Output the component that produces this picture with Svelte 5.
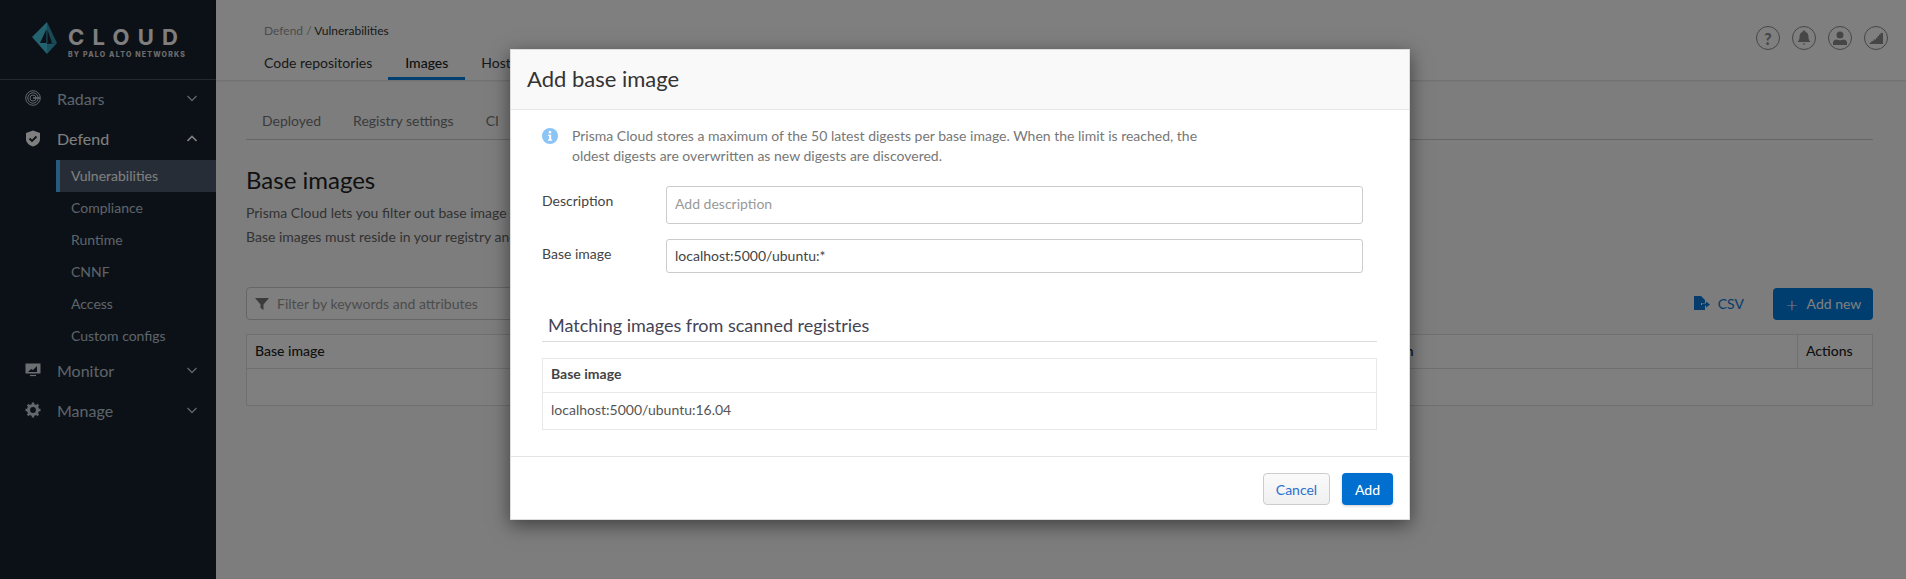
<script>
  const subs = ['Vulnerabilities', 'Compliance', 'Runtime', 'CNNF', 'Access', 'Custom configs'];
</script>

<div class="page">
  <aside class="side">
    <div class="brand">
      <svg class="mark" width="26" height="33" viewBox="0 0 26 33">
        <path d="M15 0 L0 15 L15 32 Z" fill="#46c4de"/>
        <path d="M15 0 L25 21 L15 21 Z" fill="#2f94ac"/>
        <path d="M8 21 L14.500 7 L14.500 21 Z" fill="#18222f"/>
        <path d="M15.500 8 L20 21 L15.500 21 Z" fill="#18222f"/>
        <path d="M15 22 L25 21 L15 32 Z" fill="#36a0bc"/>
      </svg>
      <div class="words">
        <div class="cloud">CLOUD</div>
        <div class="by">BY PALO ALTO NETWORKS</div>
      </div>
    </div>
    <nav>
      <div class="nav">
        <svg class="ico" width="16" height="16" viewBox="0 0 16 16" fill="none" stroke="#c4d0dc" stroke-width="1"><circle cx="8" cy="8" r="7.300"/><circle cx="8" cy="8" r="5.200"/><circle cx="8" cy="8" r="3"/><path d="M8 8h7" stroke-width="1.600"/></svg>
        <span>Radars</span>
        <svg class="chev" width="10" height="7" viewBox="0 0 10 7" fill="none" stroke="#b8c4d0" stroke-width="1.400"><path d="M.5 1l4.500 4.500L9.500 1"/></svg>
      </div>
      <div class="nav on">
        <svg class="ico" width="16" height="17" viewBox="0 0 16 17"><path d="M8 0.500L15 3v6c0 4-3.500 6.500-7 7.500C4.500 15.500 1 13 1 9V3z" fill="#fff"/><path d="M4.500 8.500l2.500 2.500 4.500-4.500" fill="none" stroke="#18222f" stroke-width="1.800"/></svg>
        <span>Defend</span>
        <svg class="chev" width="10" height="7" viewBox="0 0 10 7" fill="none" stroke="#fff" stroke-width="1.600"><path d="M.5 6L5 1.500 9.500 6"/></svg>
      </div>
      {#each subs as s, i}
        <div class="sub" class:active={i === 0}>{s}</div>
      {/each}
      <div class="nav">
        <svg class="ico" width="16" height="14" viewBox="0 0 16 14"><path d="M0.500 0.500h15v10h-15z" fill="#d8dee4"/><path d="M3 9l3-3 2 1 4-4v6z" fill="#18222f"/><path d="M5 12.500h6" stroke="#d8dee4" stroke-width="1.200"/></svg>
        <span>Monitor</span>
        <svg class="chev" width="10" height="7" viewBox="0 0 10 7" fill="none" stroke="#b8c4d0" stroke-width="1.400"><path d="M.5 1l4.500 4.500L9.500 1"/></svg>
      </div>
      <div class="nav">
        <svg class="ico" width="16" height="16" viewBox="0 0 16 16"><circle cx="8" cy="8" r="4.500" fill="none" stroke="#c4d0dc" stroke-width="3.200"/><path d="M8 0.500v3M8 12.500v3M0.500 8h3M12.500 8h3M2.700 2.700l2.100 2.100M11.200 11.200l2.100 2.100M13.300 2.700l-2.100 2.100M4.800 11.200l-2.100 2.100" stroke="#c4d0dc" stroke-width="2.400"/></svg>
        <span>Manage</span>
        <svg class="chev" width="10" height="7" viewBox="0 0 10 7" fill="none" stroke="#b8c4d0" stroke-width="1.400"><path d="M.5 1l4.500 4.500L9.500 1"/></svg>
      </div>
    </nav>
  </aside>

  <main class="main">
    <div class="toggle">
      <svg width="7" height="11" viewBox="0 0 7 11" fill="none" stroke="#fff" stroke-width="1.200"><path d="M5.500 1L1.500 5.500l4 4.500"/></svg>
    </div>
    <header class="head">
      <div class="crumb"><span>Defend /</span> <b>Vulnerabilities</b></div>
      <div class="tabs">
        <span class="tab">Code repositories</span>
        <span class="tab cur">Images</span>
        <span class="tab">Hosts</span>
      </div>
      <div class="icons">
        <span class="circle q">?</span>
        <span class="circle"><svg width="14" height="16" viewBox="0 0 14 16"><path d="M7 0.500c1 0 1.500.7 1.500 1.500C11 2.800 11.500 5 11.500 7.500c0 2 1 3.500 2 4.500H.5c1-1 2-2.500 2-4.500C2.500 5 3 2.800 5.500 2 5.500 1.200 6 .5 7 .5z" fill="#8c8c8c"/><path d="M5.500 13.500h3L7 15z" fill="#8c8c8c"/></svg></span>
        <span class="circle"><svg width="14" height="15" viewBox="0 0 14 15"><circle cx="7" cy="4" r="3.500" fill="#8c8c8c"/><path d="M0 14v-2.500C0 9.500 2 8.500 4 8.500c1 1 5 1 6 0 2 0 4 1 4 3V14z" fill="#8c8c8c"/></svg></span>
        <span class="circle"><svg width="14" height="11" viewBox="0 0 14 11"><path d="M0 11L3 8h1.500V6.500H7V5h1.500V3H10V1.500h1.500V0H14v11z" fill="#8c8c8c"/></svg></span>
      </div>
    </header>

    <section class="content">
      <div class="subtabs">
        <span>Deployed</span>
        <span>Registry settings</span>
        <span>CI</span>
      </div>
      <h1>Base images</h1>
      <p>Prisma Cloud lets you filter out base image<br>Base images must reside in your registry and</p>
      <div class="tools">
        <div class="filter">
          <svg width="14" height="14" viewBox="0 0 14 14"><path d="M0 1h14L8.500 7.500V13L5.500 11V7.500z" fill="#777"/></svg>
          <span>Filter by keywords and attributes</span>
        </div>
        <div class="csv">
          <svg width="16" height="16" viewBox="0 0 16 16"><path d="M0 0h7l4 4v3H7v2h4v5H0z" fill="#0a78d8"/><path d="M8 7.500h4V5.500l4 3-4 3v-2H8z" fill="#0a78d8"/></svg>
          <span>CSV</span>
        </div>
        <div class="addnew"><span class="plus">+</span>Add new</div>
      </div>
      <div class="table">
        <div class="row hd"><span class="c1">Base image</span><span class="c2">Description</span><span class="c3">Actions</span></div>
        <div class="row empty"></div>
      </div>
    </section>
  </main>

  <div class="backdrop"></div>

  <div class="modal">
    <div class="m-head">Add base image</div>
    <div class="m-body">
      <div class="info">
        <svg width="16" height="16" viewBox="0 0 16 16"><circle cx="8" cy="8" r="8" fill="#8cc4f5"/><rect x="6.800" y="3" width="2.400" height="2.400" fill="#fff"/><path d="M6 6.800h3.200v4.700h1v1.300H6v-1.300h1v-3.400H6z" fill="#fff"/></svg>
        <div>Prisma Cloud stores a maximum of the 50 latest digests per base image. When the limit is reached, the<br>oldest digests are overwritten as new digests are discovered.</div>
      </div>
      <div class="field f1">
        <label for="d">Description</label>
        <input id="d" class="tall" placeholder="Add description" />
      </div>
      <div class="field f2">
        <label for="b">Base image</label>
        <input id="b" value="localhost:5000/ubuntu:*" />
      </div>
      <h2>Matching images from scanned registries</h2>
      <div class="m-table">
        <div class="m-th">Base image</div>
        <div class="m-td">localhost:5000/ubuntu:16.04</div>
      </div>
    </div>
    <div class="m-foot">
      <button class="cancel">Cancel</button>
      <button class="add">Add</button>
    </div>
  </div>
</div>

<style>
  :global(body) { margin: 0; background: #fafafa; }
  .page {
    position: relative; display: flex; width: 1906px; height: 579px; overflow: hidden;
    font-family: Lato, "Open Sans", sans-serif; font-size: 14px; color: #333;
  }
  .side { width: 216px; flex: none; background: #18222f; color: #bcc8d4; }
  .brand { height: 80px; box-sizing: border-box; border-bottom: 1px solid #4a525c; display: flex; gap: 10px; padding: 22px 0 0 32px; }
  .words { padding-top: 4px; width: 120px; }
  .cloud { font-family: Inter, sans-serif; font-size: 22px; font-weight: 700; color: #fff; letter-spacing: 8.200px; line-height: 22px; }
  .by { font-family: Inter, sans-serif; font-size: 7px; line-height: 8px; font-weight: 800; letter-spacing: 1.200px; color: #d8d8d8; margin-top: 3px; white-space: nowrap; }
  .nav { display: flex; align-items: center; height: 40px; box-sizing: border-box; padding: 0 19px 4px 25px; font-size: 16px; }
  .nav span { margin-left: 16px; flex: 1; }
  .nav .ico { flex: none; }
  .on { color: #fff; }
  .sub { height: 32px; line-height: 31px; padding-left: 71px; font-size: 14px; }
  .sub.active { background: #4c5a6c; color: #fff; box-shadow: inset 4px 0 0 #46b8ff; margin-left: 56px; padding-left: 15px; }

  .main { flex: 1; position: relative; background: #fafafa; min-width: 0; }
  .toggle { position: absolute; left: 0; top: 0; width: 16px; height: 19px; background: #50dcff; border-radius: 0 0 3px 0; display: flex; align-items: center; justify-content: center; }
  .head { height: 80px; box-sizing: border-box; background: #fff; position: relative; box-shadow: 0 1px 2px rgba(0,0,0,.12); padding: 24px 0 0 48px; }
  .crumb { font-size: 12px; line-height: 14px; color: #999; }
  .crumb b { font-weight: 400; color: #333; }
  .tabs { display: flex; margin-top: 9px; }
  .tab { font-size: 14px; line-height: 31px; height: 33px; box-sizing: border-box; margin-right: 32px; white-space: nowrap; }
  .tab.cur { font-weight: 500; color: #222; margin-left: -16px; margin-right: 16px; padding: 0 17px; border-bottom: 3px solid #0080e0; }
  .icons { position: absolute; right: 18px; top: 26px; display: flex; gap: 12px; }
  .circle { width: 24px; height: 24px; box-sizing: border-box; border: 1px solid #8c8c8c; border-radius: 50%; display: flex; align-items: center; justify-content: center; }
  .q { font-weight: 900; font-size: 16px; color: #8c8c8c; }

  .content { padding: 0 33px 0 30px; }
  .subtabs { margin-top: 28px; height: 31px; border-bottom: 1px solid #ccc; display: flex; gap: 32px; padding-left: 16px; line-height: 26px; font-size: 14px; color: #777; }
  h1 { font-size: 24px; font-weight: 400; margin: 25px 0 0; line-height: 30px; color: #222; }
  p { margin: 6px 0 0; width: 270px; overflow: hidden; font-size: 14px; line-height: 24px; color: #666; white-space: nowrap; }
  .tools { margin-top: 38px; display: flex; align-items: center; }
  .filter { width: 1000px; flex: none; height: 33px; box-sizing: border-box; border: 1px solid #ccc; border-radius: 4px; background: #fff; display: flex; align-items: center; gap: 8px; padding-left: 8px; color: #999; font-size: 14px; }
  .csv { margin-left: auto; display: flex; align-items: center; gap: 8px; color: #0a78d8; }
  .addnew { margin-left: 29px; width: 100px; height: 32px; box-sizing: border-box; background: #007ce0; color: #fff; border-radius: 4px; display: flex; align-items: center; padding-left: 13px; }
  .plus { font-size: 20px; font-weight: 300; line-height: 20px; margin-right: 9px; }
  .table { margin-top: 14px; border: 1px solid #dedede; background: #fff; }
  .row { display: flex; }
  .hd { height: 33px; line-height: 32px; border-bottom: 1px solid #dedede; font-weight: 500; color: #222; font-size: 14px; }
  .c1 { width: 1095px; padding-left: 8px; flex: none; box-sizing: border-box; }
  .c2 { flex: 1; }
  .c3 { width: 75px; flex: none; box-sizing: border-box; padding-left: 8px; border-left: 1px solid #dedede; }
  .empty { height: 36px; }

  .backdrop { position: absolute; inset: 0; background: rgba(0,0,0,.5); }

  .modal { position: absolute; left: 510px; top: 49px; width: 900px; height: 471px; box-sizing: border-box; background: #fff; display: flex; flex-direction: column; border: 1px solid #ddd; box-shadow: 0 5px 18px rgba(0,0,0,.5); }
  .m-head { height: 60px; box-sizing: border-box; line-height: 58px; padding-left: 16px; font-size: 22px; background: #f9f9f9; border-bottom: 1px solid #e5e5e5; color: #333; flex: none; }
  .m-body { flex: 1; padding: 0 32px 0 31px; min-height: 0; }
  .info { display: flex; gap: 14px; margin-top: 16px; line-height: 20px; color: #777; font-size: 14px; }
  .info svg { flex: none; margin-top: 2px; }
  .field { display: flex; align-items: flex-start; margin-right: 14px; }
  .f1 { margin-top: 20px; }
  .f2 { margin-top: 15px; }
  label { width: 124px; flex: none; color: #444; font-size: 14px; line-height: 30px; }
  input { flex: 1; min-width: 0; height: 34px; box-sizing: border-box; border: 1px solid #ccc; border-radius: 3px; padding: 0 8px 2px; font: 14px Lato, sans-serif; color: #444; background: #fff; }
  input.tall { height: 38px; padding-bottom: 3px; }
  input::placeholder { color: #999; opacity: 1; }
  h2 { margin: 40px 0 0; font-size: 18px; font-weight: 400; color: #445; padding: 0 0 0 6px; line-height: 24px; border-bottom: 1px solid #ddd; height: 28px; }
  .m-table { margin-top: 16px; border: 1px solid #e8e8e8; }
  .m-th { height: 33px; line-height: 30px; padding-left: 8px; font-weight: 700; border-bottom: 1px solid #e8e8e8; color: #444; }
  .m-td { height: 36px; line-height: 34px; padding-left: 8px; color: #555; }
  .m-foot { height: 63px; box-sizing: border-box; flex: none; border-top: 1px solid #e5e5e5; display: flex; justify-content: flex-end; align-items: center; gap: 12px; padding: 2px 16px 0 0; }
  button { font: 14px Lato, sans-serif; height: 32px; border-radius: 4px; }
  .cancel { width: 67px; background: linear-gradient(#fafafa, #f0f0f0); border: 1px solid #ccc; color: #2a6fd0; }
  .add { width: 51px; background: #006fcf; border: 0; color: #fff; font-weight: 500; box-shadow: 0 1px 3px rgba(0,0,0,.2); }
</style>
